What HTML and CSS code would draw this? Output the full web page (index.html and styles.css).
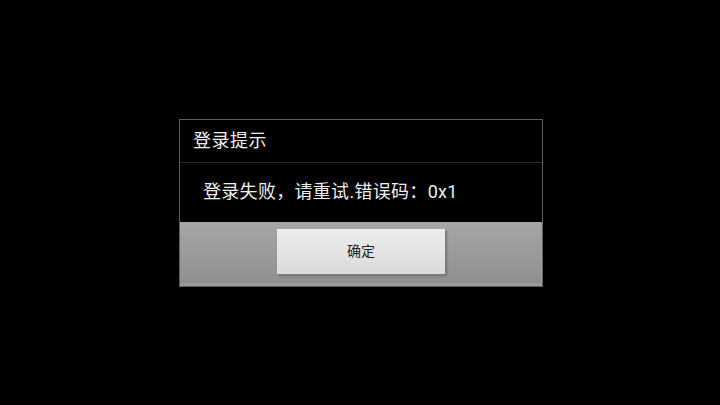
FILE: index.html
```html
<!DOCTYPE html>
<html lang="zh-CN">
<head>
    <meta charset="UTF-8">
    <title>登录提示</title>
    <link rel="stylesheet" href="styles.css">
</head>
<body>
    <div class="screen">
        <div class="dialog">
            <div class="dialog__title">登录提示</div>
            <div class="dialog__msg">登录失败，请重试.错误码：0x1</div>
            <div class="dialog__footer">
                <span class="dialog__btn">确定</span>
            </div>
        </div>
    </div>
</body>
</html>
```

FILE: styles.css
```css
html, body{
    margin: 0;
    padding: 0;
    background: #000;
}
body{
    font-family: Roboto, "Noto Sans CJK SC", sans-serif;
    color: #eee;
}
.screen{
    width: 720px;
    height: 405px;
    padding-left: 2px;
    box-sizing: border-box;
    display: flex;
    align-items: center;
    justify-content: center;
}
.dialog{
    width: 362px;
    height: 166px;
    border: 1px solid #5e5e5e;
    background: #000;
    display: flex;
    flex-direction: column;
}
.dialog__title{
    height: 43px;
    line-height: 42px;
    padding-left: 13px;
    font-size: 18px;
    letter-spacing: 0.5px;
    border-bottom: 1px solid #2a2a2a;
    box-sizing: border-box;
}
.dialog__msg{
    height: 59px;
    line-height: 57px;
    padding-left: 23px;
    font-size: 18px;
    letter-spacing: 0.3px;
}
.dialog__footer{
    flex: 1;
    background: linear-gradient(#a6a6a6, #8e8e8e);
    box-shadow: inset 0 -3px 0 #9c9c9c, inset -1px 0 0 #a0a0a0;
    display: flex;
    justify-content: center;
    padding-top: 7px;
    box-sizing: border-box;
}
.dialog__btn{
    width: 168px;
    height: 45px;
    line-height: 45px;
    text-align: center;
    font-size: 14px;
    color: #222;
    background: linear-gradient(#ececec, #dadada);
    box-shadow: 1px 1px 0 #7c7c7c, 2px 2px 2px rgba(0, 0, 0, 0.25);
}
```
